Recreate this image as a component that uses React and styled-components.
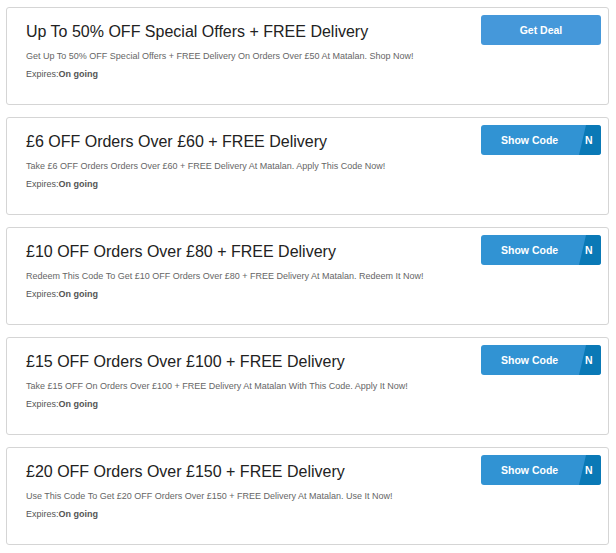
import styled, { createGlobalStyle } from "styled-components";

const Global = createGlobalStyle`
  body {
    margin: 0;
    background: #fff;
    font-family: "Liberation Sans", Arial, sans-serif;
  }
`;

const Wrap = styled.div`
  padding: 7px 7px 0 6px;
  display: flex;
  flex-direction: column;
  gap: 12px;
`;

const Card = styled.div`
  box-sizing: border-box;
  height: 98px;
  border: 1px solid #d5d5d5;
  border-radius: 3px;
  display: flex;
  justify-content: space-between;
  padding: 7px 7px 0 19px;
`;

const Info = styled.div`
  padding-top: 7px;
`;

const Title = styled.h3`
  margin: 0 0 5px;
  font-size: 16px;
  line-height: 20px;
  font-weight: 400;
  color: #222;
`;

const Desc = styled.p`
  margin: 0;
  font-size: 9px;
  line-height: 18px;
  color: #666;
`;

const Expires = styled.div`
  font-size: 9px;
  line-height: 18px;
  color: #555;
  b {
    font-weight: 700;
  }
`;

const Button = styled.button`
  all: unset;
  position: relative;
  overflow: hidden;
  box-sizing: border-box;
  width: 120px;
  height: 30px;
  flex-shrink: 0;
  border-radius: 3px;
  background: ${(props) => (props.$code ? "#3193d3" : "#4598da")};
  color: #fff;
  font-size: 10.5px;
  font-weight: 700;
  text-align: ${(props) => (props.$code ? "left" : "center")};
  padding-left: ${(props) => (props.$code ? "20px" : "0")};
  line-height: 30px;
  cursor: pointer;
`;

const Peek = styled.span`
  position: absolute;
  top: 0;
  right: 0;
  width: 22px;
  height: 100%;
  background: #0a79b6;
  clip-path: polygon(7px 0, 100% 0, 100% 100%, 0 100%);
  padding-left: 6px;
  box-sizing: border-box;
  font-size: 10.5px;
  font-weight: 700;
  color: #fff;
  text-align: left;
`;

const offers = [
  {
    title: "Up To 50% OFF Special Offers + FREE Delivery",
    desc: "Get Up To 50% OFF Special Offers + FREE Delivery On Orders Over £50 At Matalan. Shop Now!",
    code: false,
  },
  {
    title: "£6 OFF Orders Over £60 + FREE Delivery",
    desc: "Take £6 OFF Orders Orders Over £60 + FREE Delivery At Matalan. Apply This Code Now!",
    code: true,
  },
  {
    title: "£10 OFF Orders Over £80 + FREE Delivery",
    desc: "Redeem This Code To Get £10 OFF Orders Over £80 + FREE Delivery At Matalan. Redeem It Now!",
    code: true,
  },
  {
    title: "£15 OFF Orders Over £100 + FREE Delivery",
    desc: "Take £15 OFF On Orders Over £100 + FREE Delivery At Matalan With This Code. Apply It Now!",
    code: true,
  },
  {
    title: "£20 OFF Orders Over £150 + FREE Delivery",
    desc: "Use This Code To Get £20 OFF Orders Over £150 + FREE Delivery At Matalan. Use It Now!",
    code: true,
  },
];

export default function App() {
  return (
    <>
      <Global />
      <Wrap>
        {offers.map((o) => (
          <Card key={o.title}>
            <Info>
              <Title>{o.title}</Title>
              <Desc>{o.desc}</Desc>
              <Expires>
                Expires:<b>On going</b>
              </Expires>
            </Info>
            {o.code ? (
              <Button $code>
                Show Code
                <Peek>N</Peek>
              </Button>
            ) : (
              <Button>Get Deal</Button>
            )}
          </Card>
        ))}
      </Wrap>
    </>
  );
}
